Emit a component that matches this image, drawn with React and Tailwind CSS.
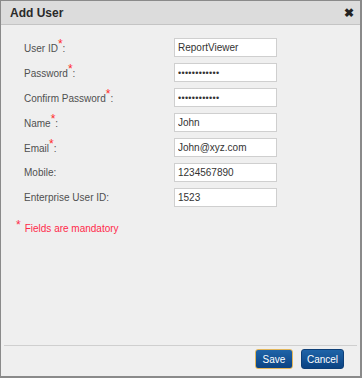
import { useState } from 'react'

const fields = [
  { label: 'User ID', value: 'ReportViewer', required: true },
  { label: 'Password', value: '••••••••••••', required: true, secret: true },
  { label: 'Confirm Password', value: '••••••••••••', required: true, secret: true },
  { label: 'Name', value: 'John', required: true },
  { label: 'Email', value: 'John@xyz.com', required: true },
  { label: 'Mobile', value: '1234567890' },
  { label: 'Enterprise User ID', value: '1523' },
]

export default function App() {
  const [values, setValues] = useState(fields.map((f) => f.value))

  return (
    <div className="h-[378px] w-[362px] bg-white font-['Liberation_Sans']">
      <div className="flex h-full flex-col border border-[#8a8a8a] border-b-2 border-r-2 bg-[#efefef]">
        {/* HEADER */}
        <div className="flex h-[24px] shrink-0 items-center justify-between border-b border-[#c4c4c4] bg-[#dcdcdc] pl-[9px] pr-[6px]">
          <h1 className="text-[12px] font-bold text-[#2a2a2a]">Add User</h1>
          <span className="text-[12px] font-bold leading-none text-[#222]">✖</span>
        </div>

        {/* FORM */}
        <div className="flex flex-1 flex-col px-[3px]">
          <div className="flex flex-col gap-[6px] pt-[13px]">
            {fields.map((f, i) => (
              <div key={f.label} className="flex h-[19px] items-center">
                <label className="w-[170px] pl-[20px] text-[10px] text-[#505050]">
                  {f.label}
                  {f.required && (
                    <span className="relative -top-[4px] text-[12px] text-[#ff2a2a]">*</span>
                  )}
                  :
                </label>
                <input
                  type="text"
                  value={values[i]}
                  onChange={(e) => {
                    const next = [...values]
                    next[i] = e.target.value
                    setValues(next)
                  }}
                  className={
                    'h-[19px] w-[103px] border border-[#cfcfcf] bg-white px-[3px] text-[#333] outline-none ' +
                    (f.secret ? 'text-[9px] tracking-[0.3px]' : 'text-[10px]')
                  }
                />
              </div>
            ))}
          </div>

          <p className="mt-[12px] pl-[12px] text-[10px] text-[#ff2a4a]">
            <span className="relative -top-[3px] mr-[4px] text-[12px]">*</span>
            Fields are mandatory
          </p>

          {/* FOOTER */}
          <div className="mt-auto flex justify-end gap-[8px] border-t border-[#cfcfcf] pb-[7px] pr-[13px] pt-[3px]">
            <button
              type="button"
              className="h-[20px] w-[38px] rounded-[3px] border border-[#e3b65a] bg-gradient-to-b from-[#1f64a8] to-[#0b4383] text-[10px] text-white"
            >
              Save
            </button>
            <button
              type="button"
              className="h-[20px] w-[43px] rounded-[3px] border border-[#0d3f78] bg-gradient-to-b from-[#1f64a8] to-[#0b4383] text-[10px] text-white"
            >
              Cancel
            </button>
          </div>
        </div>
      </div>
    </div>
  )
}
